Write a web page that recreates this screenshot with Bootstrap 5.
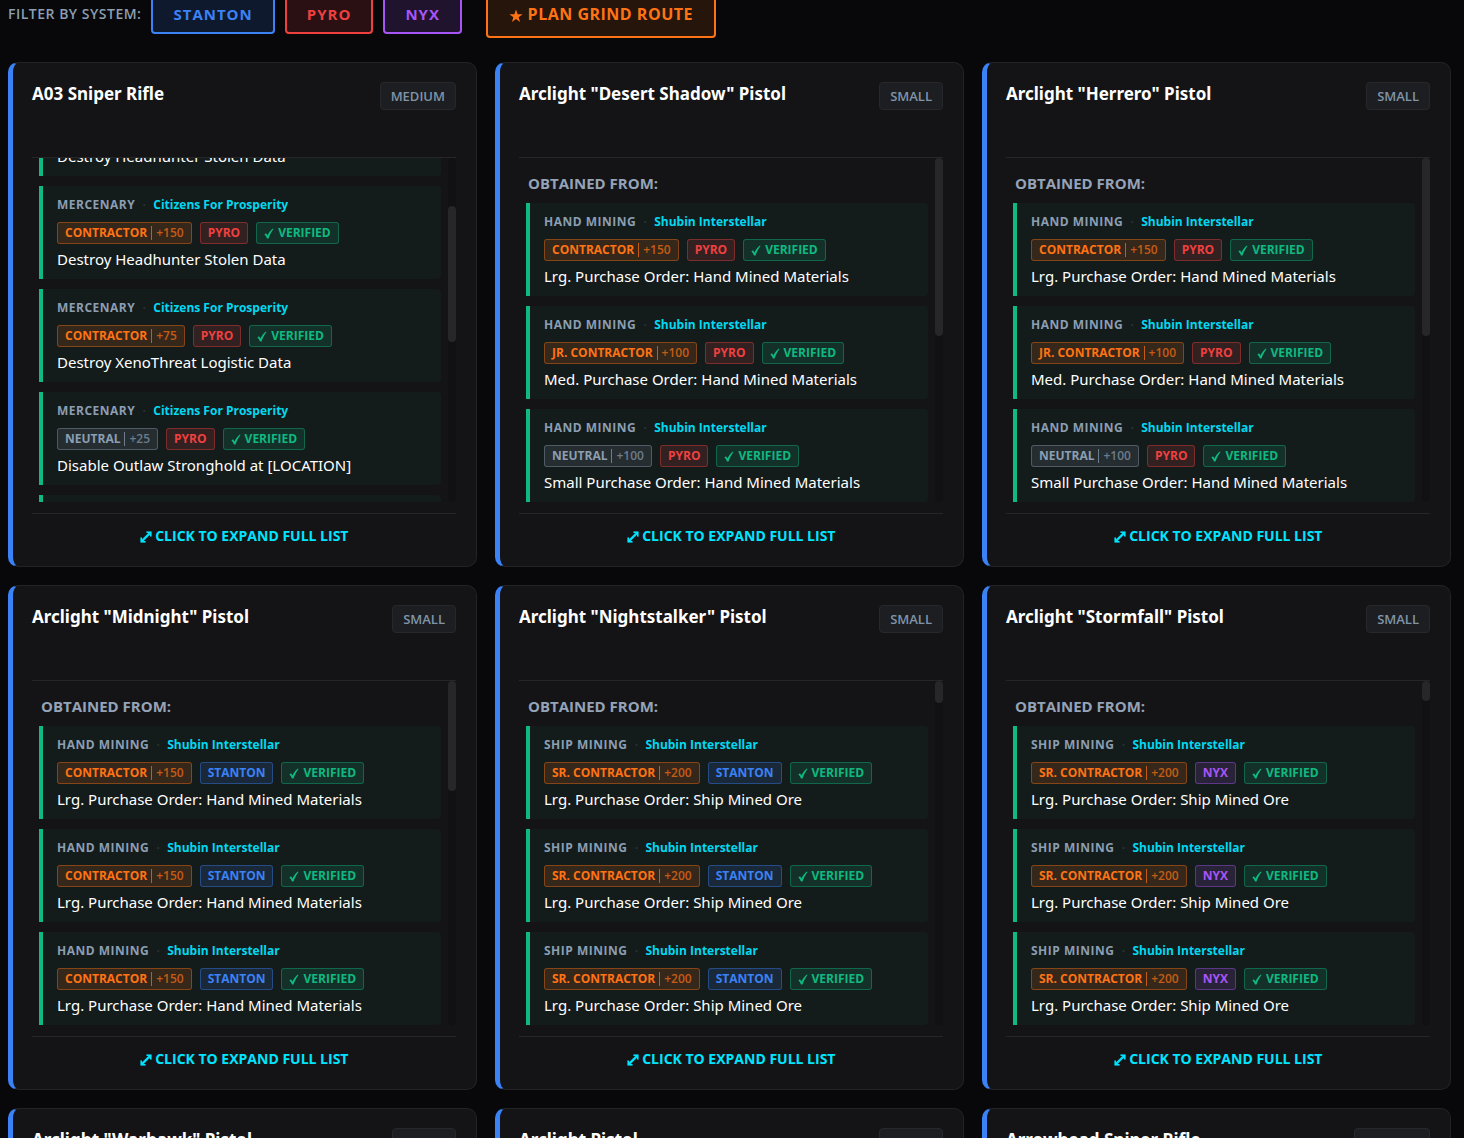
<!DOCTYPE html>
<html lang="en">
<head>
<meta charset="utf-8">
<meta name="viewport" content="width=device-width, initial-scale=1">
<title>Blueprint Sources</title>
<link rel="stylesheet" href="https://cdn.jsdelivr.net/npm/bootstrap@5.3.0/dist/css/bootstrap.min.css">
<style>
:root { --hue-orange: 255,115,20; --hue-red: 239,64,64; --hue-blue: 59,130,246; --hue-violet: 168,85,247; --hue-green: 16,185,129; --hue-slate: 139,158,178; }
body { background: #08080a; color: #fff; font-family: "Open Sans", "Noto Sans", sans-serif; font-size: 15px; line-height: 24px; }
.page { padding: 0 13px 0 8px; }
.filter-bar { gap: 10px; margin: -10px 0 24px; }
.filter-label { color: #8b9eb2; font-size: 14px; font-weight: 600; letter-spacing: .5px; }
.sys-btn { --bs-btn-color: rgb(var(--hue)); --bs-btn-bg: rgba(var(--hue), .15); --bs-btn-border-color: rgb(var(--hue)); --bs-btn-hover-color: #fff; --bs-btn-hover-bg: rgba(var(--hue), .3); --bs-btn-hover-border-color: rgb(var(--hue)); --bs-btn-border-radius: 4px; --bs-btn-border-width: 2px; --bs-btn-padding-x: 20px; --bs-btn-padding-y: 6px; --bs-btn-font-size: 15px; --bs-btn-font-weight: 700; --bs-btn-line-height: 24px; letter-spacing: 1px; }
.route-btn { --bs-btn-bg: rgba(var(--hue), .12); --bs-btn-padding-x: 21px; --bs-btn-padding-y: 10px; --bs-btn-font-size: 16px; margin-left: 14px; letter-spacing: .5px; }
.orange { --hue: var(--hue-orange); } .red { --hue: var(--hue-red); } .blue { --hue: var(--hue-blue); }
.violet { --hue: var(--hue-violet); } .green { --hue: var(--hue-green); } .slate { --hue: var(--hue-slate); }
.item-grid { --bs-gutter-x: 18px; --bs-gutter-y: 18px; }
.item-card { --bs-card-bg: #141416; --bs-card-color: #fff; --bs-card-border-color: #232326; --bs-card-border-radius: 10px; border-left: 5px solid #3b82f6; padding: 19px 20px 8px 19px; }
.item-head { min-height: 75px; }
.item-name { font-family: "Noto Sans", "Open Sans", sans-serif; font-size: 17px; font-weight: 700; line-height: 24px; }
.size-tag { background: #1c1e21; border: 1px solid #26282b; border-radius: 4px; color: #8094a8; font-size: 13px; font-weight: 600; line-height: 26px; padding: 0 10px; }
.source-wrap { border-top: 1px solid #262629; height: 345px; }
.source-list { overflow-y: auto; scrollbar-width: none; padding: 0 7px; }
.source-list::-webkit-scrollbar { display: none; }
.source-title { color: #94a3b8; font-size: 15px; font-weight: 700; line-height: 24px; padding: 13px 2px 8px; }
.source-item { background: #141b1b; border-left: 4px solid #10b981; border-radius: 0 4px 4px 0; margin-bottom: 10px; padding: 11px 14px 8px; }
.source-meta { font-size: 12px; font-weight: 700; line-height: 16px; margin-bottom: 9px; }
.source-kind { color: #8b9eb2; font-size: 12px; letter-spacing: .5px; }
.source-dot { color: #2b3233; width: 18px; text-align: center; }
.source-org { color: #00d9f0; }
.source-tags { gap: 8px; margin-bottom: 3px; }
.source-name { font-family: "Noto Sans", "Open Sans", sans-serif; }
.tag { display: inline-flex; align-items: center; background: rgba(var(--hue), .14); border: 1px solid rgba(var(--hue), .4); border-radius: 3px; color: rgb(var(--hue)); font-size: 12px; font-weight: 700; line-height: 20px; padding: 0 7px; }
.bonus { border-left: 1px solid; font-weight: 600; line-height: 14px; margin-left: 4px; opacity: .7; padding-left: 4px; }
.tick { margin-right: 4px; }
.scroll-track { background: #111113; border-radius: 4px; width: 8px; }
.scroll-thumb { background: #27272a; border-radius: 4px; }
.expand-row { border-top: 1px solid #262629; margin-top: 11px; }
.expand-btn { --bs-btn-color: #00e5ff; --bs-btn-hover-color: #7df2ff; --bs-btn-padding-y: 10px; --bs-btn-border-width: 0; --bs-btn-font-size: 14px; --bs-btn-font-weight: 700; --bs-btn-line-height: 24px; width: 100%; }
</style>
<script src="https://cdn.jsdelivr.net/npm/bootstrap@5.3.0/dist/js/bootstrap.bundle.min.js"></script>
</head>
<body>
<main class="page vh-100 overflow-hidden">
  <div class="filter-bar d-flex align-items-center">
    <span class="filter-label">FILTER BY SYSTEM:</span>
    <button type="button" class="btn sys-btn blue">STANTON</button>
    <button type="button" class="btn sys-btn red">PYRO</button>
    <button type="button" class="btn sys-btn violet">NYX</button>
    <button type="button" class="btn sys-btn route-btn orange"><svg width="14" height="14" viewBox="0 0 14 14" fill="currentColor" aria-hidden="true"><path d="M7 .4 8.600 5.200h5L9.600 8.200l1.500 4.900L7 10.100l-4.100 3 1.500-4.900-4-3h5z"/></svg> PLAN GRIND ROUTE</button>
  </div>
  <div class="row row-cols-1 row-cols-lg-3 item-grid" id="grid"></div>
</main>
<script>
const TICK = '<svg class="tick" width="10" height="11" viewBox="0 0 10 11" fill="currentColor" aria-hidden="true"><path d="M.4 6.600 2 5.200 3.500 7.500C4.700 4.800 6.400 2.100 8.900.4l.6.6C7.600 3.600 5.800 6.600 4.500 10.400H3C2.400 9 1.600 7.700.4 6.600z"/></svg>';
const ARROW = '<svg width="12" height="12" viewBox="0 0 12 12" fill="currentColor" aria-hidden="true"><path d="M6 .5h5.500V6L9.700 4.200 4.200 9.700 6 11.500H.5V6l1.800 1.800 5.500-5.500z" opacity=".35"/><path d="M6.500.5h5V5.500H10V3.400L3.400 10H5.500v1.500h-5v-5H2v2.100L8.600 2H6.500z"/></svg>';
const HUES = { PYRO: 'red', STANTON: 'blue', NYX: 'violet' };
const ROW = 103, HEAD = 45;
const CIT = 'Citizens For Prosperity', SHU = 'Shubin Interstellar';
const mercenary = [
  ['MERCENARY', CIT, 'CONTRACTOR', 150, 'PYRO', 'Destroy Headhunter Stolen Data'],
  ['MERCENARY', CIT, 'CONTRACTOR', 150, 'PYRO', 'Destroy Headhunter Stolen Data'],
  ['MERCENARY', CIT, 'CONTRACTOR', 75, 'PYRO', 'Destroy XenoThreat Logistic Data'],
  ['MERCENARY', CIT, 'NEUTRAL', 25, 'PYRO', 'Disable Outlaw Stronghold at [LOCATION]']
];
const handPyro = [
  ['HAND MINING', SHU, 'CONTRACTOR', 150, 'PYRO', 'Lrg. Purchase Order: Hand Mined Materials'],
  ['HAND MINING', SHU, 'JR. CONTRACTOR', 100, 'PYRO', 'Med. Purchase Order: Hand Mined Materials'],
  ['HAND MINING', SHU, 'NEUTRAL', 100, 'PYRO', 'Small Purchase Order: Hand Mined Materials']
];
const handStanton = [['HAND MINING', SHU, 'CONTRACTOR', 150, 'STANTON', 'Lrg. Purchase Order: Hand Mined Materials']];
const ship = system => [['SHIP MINING', SHU, 'SR. CONTRACTOR', 200, system, 'Lrg. Purchase Order: Ship Mined Ore']];
const items = [
  { name: 'A03 Sniper Rifle', size: 'MEDIUM', rows: mercenary, total: 8, scroll: 120 },
  { name: 'Arclight "Desert Shadow" Pistol', size: 'SMALL', rows: handPyro, total: 6 },
  { name: 'Arclight "Herrero" Pistol', size: 'SMALL', rows: handPyro, total: 6 },
  { name: 'Arclight "Midnight" Pistol', size: 'SMALL', rows: handStanton, total: 10 },
  { name: 'Arclight "Nightstalker" Pistol', size: 'SMALL', rows: ship('STANTON'), total: 52 },
  { name: 'Arclight "Stormfall" Pistol', size: 'SMALL', rows: ship('NYX'), total: 56 },
  { name: 'Arclight "Warhawk" Pistol', size: 'SMALL', rows: [], total: 0 },
  { name: 'Arclight Pistol', size: 'SMALL', rows: [], total: 0 },
  { name: 'Arrowhead Sniper Rifle', size: 'MEDIUM', rows: [], total: 0 }
];
const source = ([kind, org, rank, bonus, system, title]) => `
  <li class="source-item">
    <div class="source-meta d-flex"><span class="source-kind">${kind}</span><span class="source-dot">·</span><span class="source-org">${org}</span></div>
    <div class="source-tags d-flex">
      <span class="tag ${rank === 'NEUTRAL' ? 'slate' : 'orange'}">${rank}<span class="bonus">+${bonus}</span></span>
      <span class="tag ${HUES[system]}">${system}</span>
      <span class="tag green">${TICK}VERIFIED</span>
    </div>
    <div class="source-name">${title}</div>
  </li>`;
const card = item => `
  <div class="col"><article class="card item-card">
    <div class="item-head d-flex justify-content-between align-items-start"><h2 class="item-name mb-0">${item.name}</h2><span class="size-tag">${item.size}</span></div>
    <div class="source-wrap d-flex">
      <div class="source-list flex-grow-1">${item.total ? '<div class="source-title">OBTAINED FROM:</div>' : ''}<ul class="list-unstyled mb-0" style="height: ${item.total * ROW}px"></ul></div>
      <div class="scroll-track"><div class="scroll-thumb"></div></div>
    </div>
    <div class="expand-row"><button type="button" class="btn expand-btn">${ARROW} CLICK TO EXPAND FULL LIST</button></div>
  </article></div>`;
const grid = document.getElementById('grid');
grid.innerHTML = items.map(card).join('');
grid.querySelectorAll('.source-wrap').forEach((wrap, i) => {
  const item = items[i];
  const list = wrap.querySelector('.source-list'), rows = list.querySelector('ul'), thumb = wrap.querySelector('.scroll-thumb');
  // Rows are added as they scroll into view; long lists hold dozens of them.
  const sync = () => {
    const needed = Math.min(item.total, Math.ceil((list.scrollTop + list.clientHeight - HEAD) / ROW));
    while (rows.children.length < needed) rows.insertAdjacentHTML('beforeend', source(item.rows[rows.children.length % item.rows.length]));
    const ratio = list.clientHeight / list.scrollHeight;
    thumb.style.height = Math.max(20, Math.round(list.clientHeight * ratio)) + 'px';
    thumb.style.marginTop = Math.round(list.scrollTop * ratio) + 'px';
  };
  list.scrollTop = item.scroll || 0;
  list.addEventListener('scroll', sync);
  sync();
});
</script>
</body>
</html>
